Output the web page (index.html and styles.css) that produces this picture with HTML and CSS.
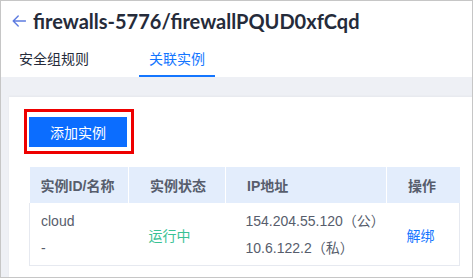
FILE: index.html
```html
<!DOCTYPE html>
<html lang="zh-CN">
<head>
<meta charset="utf-8">
<title>firewalls-5776</title>
<link rel="stylesheet" href="styles.css">
</head>
<body>
<div class="frame">
  <header class="header">
    <div class="title-row">
      <svg class="back" width="14" height="14" viewBox="0 0 14 14" aria-hidden="true">
        <path d="M13.5 7H1.2M6.2 2 1.2 7l5 5" fill="none" stroke="#5e7ce0" stroke-width="1.4" stroke-linecap="round" stroke-linejoin="round"/>
      </svg>
      <h1 class="title">firewalls-5776/firewallPQUD0xfCqd</h1>
    </div>
    <nav class="tabs">
      <span class="tab">安全组规则</span>
      <span class="tab active">关联实例</span>
    </nav>
  </header>
  <main class="content">
    <section class="card">
      <div class="highlight"><button class="btn-primary">添加实例</button></div>
      <table class="table">
        <colgroup>
          <col class="c1"><col class="c2"><col class="c3"><col class="c4">
        </colgroup>
        <thead>
          <tr>
            <th class="first">实例ID/名称</th>
            <th>实例状态</th>
            <th>IP地址</th>
            <th>操作</th>
          </tr>
        </thead>
        <tbody>
          <tr>
            <td class="first"><div class="line">cloud</div><div class="line">-</div></td>
            <td><span class="status">运行中</span></td>
            <td><div class="line">154.204.55.120（公）</div><div class="line">10.6.122.2（私）</div></td>
            <td><a class="link">解绑</a></td>
          </tr>
        </tbody>
      </table>
    </section>
  </main>
</div>
</body>
</html>
```

FILE: styles.css
```css
html, body {
  margin: 0;
  padding: 0;
  background: #ffffff;
}
body {
  font-family: "Liberation Sans", "Noto Sans CJK SC", sans-serif;
  color: #252b3a;
}
.frame {
  box-sizing: border-box;
  width: 473px;
  height: 278px;
  border: 1px solid #c6c6c6;
  overflow: hidden;
  display: flex;
  flex-direction: column;
  background: #ffffff;
}
.header {
  background: #ffffff;
  padding: 6px 0 0 11px;
}
.title-row {
  display: flex;
  align-items: center;
  height: 28px;
  gap: 7px;
}
.back {
  flex: none;
}
.title {
  margin: 0;
  font-family: "Lato", "Noto Sans CJK SC", sans-serif;
  font-weight: 700;
  font-size: 20px;
  line-height: 28px;
  color: #252b3a;
}
.tabs {
  display: flex;
  gap: 40px;
  margin-left: -3px;
}
.tab {
  font-family: "Noto Sans CJK SC", sans-serif;
  font-size: 14px;
  line-height: 20px;
  padding: 13px 10px 7px;
  border-bottom: 2px solid transparent;
  color: #252b3a;
}
.tab.active {
  color: #1476ff;
  border-bottom-color: #1476ff;
}
.content {
  flex: 1;
  background: #eef0f5;
  padding: 20px 0 0 8px;
}
.card {
  width: 470px;
  height: 100%;
  box-sizing: border-box;
  background: #ffffff;
  padding: 12px 0 0 15px;
  box-shadow: 0 -1px 2px rgba(0,0,0,0.04);
}
.highlight {
  display: inline-block;
  border: 3px solid #ee0000;
  padding: 5px 4px 4px 2px;
  vertical-align: top;
}
.btn-primary {
  display: block;
  width: 98px;
  height: 30px;
  border: 0;
  margin: 0;
  padding: 0;
  background: #0b6dff;
  color: #ffffff;
  font-family: "Noto Sans CJK SC", sans-serif;
  font-size: 14px;
  line-height: 30px;
}
.table {
  margin: 13px 0 0 5px;
  width: 430px;
  border-collapse: collapse;
  table-layout: fixed;
}
.c1 { width: 99px; }
.c2 { width: 97px; }
.c3 { width: 161px; }
.c4 { width: 73px; }
.table th {
  background: #e3edfc;
  height: 36px;
  padding: 0 0 0 21px;
  text-align: left;
  font-family: "Liberation Sans", "Noto Sans CJK SC", sans-serif;
  font-weight: 700;
  font-size: 14px;
  color: #575d6c;
  border-left: 1px solid #ffffff;
  box-sizing: border-box;
}
.table th.first {
  padding-left: 11px;
  border-left: 0;
}
.table td {
  padding: 5px 0 3px 20px;
  height: 60px;
  box-sizing: border-box;
  font-size: 14px;
  color: #575d6c;
  vertical-align: middle;
  border-bottom: 1px solid #e6e9f0;
}
.table td.first {
  padding-left: 11px;
  border-left: 1px solid #e6e9f0;
}
.table td:last-child {
  border-right: 1px solid #e6e9f0;
}
.line {
  line-height: 27px;
  white-space: nowrap;
}
.status {
  color: #3ac295;
}
.link {
  color: #1476ff;
  font-size: 14px;
}
```
